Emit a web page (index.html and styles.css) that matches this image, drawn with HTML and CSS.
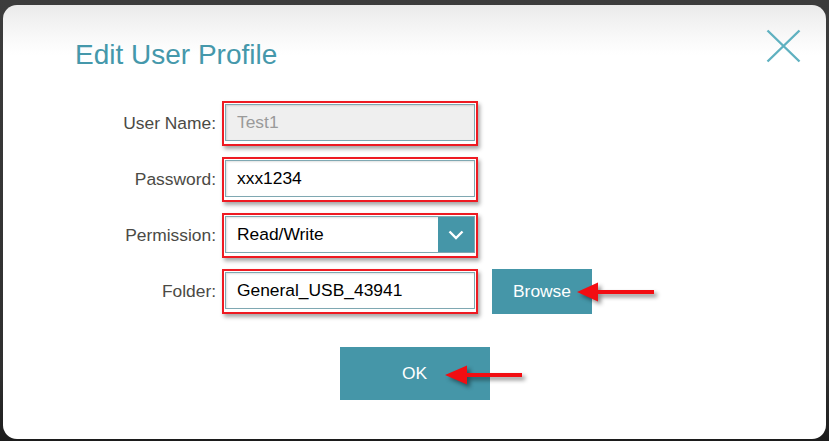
FILE: index.html
```html
<!DOCTYPE html>
<html lang="en">
<head>
<meta charset="utf-8">
<title>Edit User Profile</title>
<link rel="stylesheet" href="styles.css">
</head>
<body>
<div class="dialog">
  <div class="header">
    <h1 class="title">Edit User Profile</h1>
    <button class="close" aria-label="Close">
      <svg width="35" height="34" viewBox="0 0 35 34"><path d="M1.5 1.5 L33.5 32.5 M33.5 1.5 L1.5 32.5" stroke="#5fb1c0" stroke-width="2.4" fill="none"/></svg>
    </button>
  </div>
  <div class="form">
    <div class="row">
      <label class="label">User Name:</label>
      <div class="field"><div class="input disabled">Test1</div></div>
    </div>
    <div class="row">
      <label class="label">Password:</label>
      <div class="field"><div class="input">xxx1234</div></div>
    </div>
    <div class="row">
      <label class="label">Permission:</label>
      <div class="field"><div class="input select"><span class="value">Read/Write</span><span class="drop"><svg width="16" height="10" viewBox="0 0 16 10"><path d="M1.5 1.5 L8 8 L14.5 1.5" stroke="#fff" stroke-width="2.4" fill="none"/></svg></span></div></div>
    </div>
    <div class="row">
      <label class="label">Folder:</label>
      <div class="field"><div class="input">General_USB_43941</div></div>
      <div class="btn-wrap">
        <button class="btn browse">Browse</button>
        <svg class="arrow arrow-browse" width="86" height="28" viewBox="0 0 86 28"><path d="M2 12 L23 2.5 L23 10 L79 10 L79 14 L23 14 L23 21.5 Z" fill="#f20d12"/></svg>
      </div>
    </div>
  </div>
  <div class="actions">
    <div class="btn-wrap">
      <button class="btn ok">OK</button>
      <svg class="arrow arrow-ok" width="86" height="28" viewBox="0 0 86 28"><path d="M2 12 L24 2.5 L24 10 L79 10 L79 14 L24 14 L24 21.5 Z" fill="#f20d12"/></svg>
    </div>
  </div>
</div>
</body>
</html>
```
FILE: styles.css
```css
* { box-sizing: border-box; }
html, body { margin: 0; padding: 0; }
body {
  width: 829px;
  height: 441px;
  overflow: hidden;
  background: linear-gradient(#3c3c3c, #2f2f2f 85%, #1c1c1c);
  font-family: "Liberation Sans", Arial, sans-serif;
  padding: 5px 3px 2px 3px;
}
.dialog {
  position: relative;
  width: 823px;
  height: 434px;
  border-radius: 14px;
  background: linear-gradient(#eaeaea 0px, #f8f8f8 30px, #ffffff 50px);
  display: flex;
  flex-direction: column;
}
.header {
  display: flex;
  justify-content: space-between;
  align-items: flex-start;
  padding: 24px 25px 0 72px;
}
.title {
  margin: 12px 0 0 0;
  font-weight: normal;
  font-size: 28px;
  line-height: 28px;
  color: #4598ab;
}
.close {
  border: 0;
  background: transparent;
  padding: 0;
  width: 35px;
  height: 34px;
  display: block;
}
.close svg { display: block; }
.form {
  margin-top: 32px;
  display: flex;
  flex-direction: column;
  gap: 11px;
  padding-left: 97px;
}
.row {
  display: flex;
  align-items: center;
  height: 45px;
}
.label {
  width: 116px;
  text-align: right;
  font-size: 17.4px;
  color: #4b4a45;
  margin-right: 6px;
}
.field {
  width: 256px;
  height: 45px;
  border: 2px solid #ee1a22;
  padding: 1px;
  box-shadow: 2px 3px 4px rgba(0, 0, 0, 0.35);
}
.input {
  height: 37px;
  border: 1px solid #7fa8b2;
  box-shadow: inset 1px 1px 2px rgba(0, 0, 0, 0.12);
  background: #fff;
  font-size: 17.4px;
  color: #000;
  padding-left: 11px;
  display: flex;
  align-items: center;
}
.input.disabled {
  background: #efefef;
  color: #9a9a9a;
}
.select {
  justify-content: space-between;
  padding-right: 0;
}
.drop {
  width: 36px;
  height: 100%;
  background: #4596a8;
  display: flex;
  align-items: center;
  justify-content: center;
}
.drop svg { display: block; }
.btn-wrap {
  position: relative;
}
.row .btn-wrap { margin-left: 14px; }
.btn {
  border: 0;
  background: #4596a8;
  color: #fff;
  font-family: "Liberation Sans", Arial, sans-serif;
  font-size: 17.4px;
  display: block;
}
.browse {
  width: 100px;
  height: 45px;
}
.actions {
  display: flex;
  justify-content: center;
  margin-top: 33px;
}
.ok {
  width: 150px;
  height: 53px;
}
.arrow {
  position: absolute;
  filter: drop-shadow(3px 3px 2px rgba(0, 0, 0, 0.45));
}
.arrow-browse { left: 83px; top: 11px; }
.arrow-ok { left: 103px; top: 16px; }
```
